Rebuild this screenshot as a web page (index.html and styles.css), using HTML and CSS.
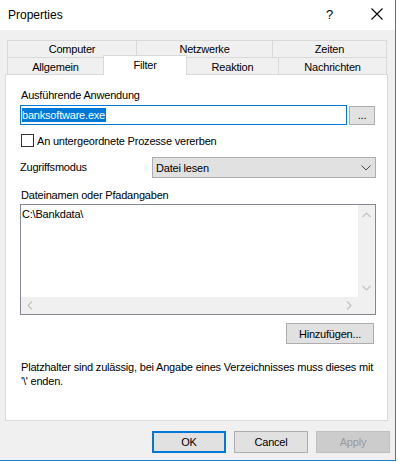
FILE: index.html
```html
<!DOCTYPE html>
<html>
<head>
<meta charset="utf-8">
<link rel="stylesheet" href="styles.css">
</head>
<body>
<div class="window">
  <div class="titlebar">
    <span class="title">Properties</span>
    <span class="help">?</span>
    <svg class="close" width="12" height="12" viewBox="0 0 12 12"><path d="M0.5 0.5 L11.5 11.5 M11.5 0.5 L0.5 11.5" stroke="#000" stroke-width="1.1" fill="none"/></svg>
  </div>
  <div class="client">
    <div class="tabs">
      <div class="tabrow back">
        <div class="tab t-computer">Computer</div>
        <div class="tab t-netz">Netzwerke</div>
        <div class="tab t-zeiten">Zeiten</div>
      </div>
      <div class="tabrow front">
        <div class="tab t-allg">Allgemein</div>
        <div class="tab t-filter active">Filter</div>
        <div class="tab t-reak">Reaktion</div>
        <div class="tab t-nach">Nachrichten</div>
      </div>
    </div>
    <div class="panel">
      <div class="label l-app">Ausführende Anwendung</div>
      <div class="row r-app">
        <div class="textbox"><span class="sel">banksoftware.exe</span></div>
        <div class="btn browse">...</div>
      </div>
      <div class="row r-check">
        <span class="checkbox"></span>
        <span class="checklabel">An untergeordnete Prozesse vererben</span>
      </div>
      <div class="row r-mode">
        <span class="modelabel">Zugriffsmodus</span>
        <div class="combo">
          <span>Datei lesen</span>
          <svg class="chev" width="10" height="6" viewBox="0 0 10 6"><path d="M0.5 0.5 L5 5 L9.5 0.5" stroke="#444" stroke-width="1" fill="none"/></svg>
        </div>
      </div>
      <div class="label l-files">Dateinamen oder Pfadangaben</div>
      <div class="listbox">
        <div class="listarea">
          <div class="items">C:\Bankdata\</div>
          <div class="vscroll">
            <svg width="9" height="6" viewBox="0 0 9 6"><path d="M0.5 5 L4.5 1 L8.5 5" stroke="#c2c2c2" stroke-width="1.2" fill="none"/></svg>
            <svg width="9" height="6" viewBox="0 0 9 6"><path d="M0.5 1 L4.5 5 L8.5 1" stroke="#c2c2c2" stroke-width="1.2" fill="none"/></svg>
          </div>
        </div>
        <div class="hscroll">
          <svg width="6" height="9" viewBox="0 0 6 9"><path d="M5 0.5 L1 4.5 L5 8.5" stroke="#c2c2c2" stroke-width="1.2" fill="none"/></svg>
          <svg width="6" height="9" viewBox="0 0 6 9"><path d="M1 0.5 L5 4.5 L1 8.5" stroke="#c2c2c2" stroke-width="1.2" fill="none"/></svg>
          <span class="corner"></span>
        </div>
      </div>
      <div class="row r-add">
        <div class="btn add">Hinzufügen...</div>
      </div>
      <p class="note">Platzhalter sind zulässig, bei Angabe eines Verzeichnisses muss dieses mit '\' enden.</p>
    </div>
    <div class="buttons">
      <div class="btn dlg ok">OK</div>
      <div class="btn dlg">Cancel</div>
      <div class="btn dlg disabled">Apply</div>
    </div>
  </div>
</div>
</body>
</html>
```

FILE: styles.css
```css
* { box-sizing: border-box; }
html, body { margin: 0; padding: 0; }
body {
  background: #ffffff;
  font-family: "Liberation Sans", Arial, sans-serif;
  font-size: 11px;
  letter-spacing: -0.2px;
  color: #000;
  width: 398px;
  height: 462px;
  overflow: hidden;
}
.window {
  width: 396px;
  height: 461px;
  border-right: 1px solid #1883d7;
  border-bottom: 1px solid #1883d7;
  display: flex;
  flex-direction: column;
  background: #f0f0f0;
}
.titlebar {
  height: 30px;
  background: #fff;
  display: flex;
  align-items: center;
  padding-left: 8px;
}
.title {
  font-size: 12px;
  letter-spacing: 0;
  flex: 1;
  padding-bottom: 1px;
}
.help {
  font-size: 13px;
  margin-right: 38px;
  padding-bottom: 2px;
}
.close {
  margin-right: 12px;
  margin-bottom: 2px;
}
.client {
  flex: 1;
  padding: 10px 5px 0 5px;
  display: flex;
  flex-direction: column;
}
.tabs {
  margin-left: 2px;
  margin-right: 3px;
}
.tabrow {
  display: flex;
  height: 17px;
}
.tab {
  border: 1px solid #d9d9d9;
  border-bottom: none;
  margin-left: -1px;
  display: flex;
  align-items: center;
  justify-content: center;
  background: #f0f0f0;
  padding-bottom: 1px;
}
.tab:first-child { margin-left: 0; }
.t-computer { width: 130px; }
.t-netz { width: 137px; }
.t-zeiten { flex: 1; }
.front .tab { padding-top: 2px; }
.t-allg { width: 97px; }
.t-filter { width: 84px; }
.t-reak { width: 93px; }
.t-nach { flex: 1; }
.tab.active {
  background: #fff;
  height: 20px;
  margin-top: -2px;
  position: relative;
  z-index: 1;
  padding-top: 0;
}
.panel {
  background: #fff;
  border: 1px solid #d9d9d9;
  height: 347px;
  margin-right: 2px;
  padding: 0 11px 0 14px;
  display: flex;
  flex-direction: column;
}
.label {
  height: 14px;
  line-height: 14px;
  padding-left: 1px;
}
.l-app { margin-top: 13px; }
.row { display: flex; align-items: center; }
.r-app { margin-top: 3px; height: 20px; }
.textbox {
  width: 327px;
  height: 20px;
  border: 1px solid #0078d7;
  padding: 2px 1px;
  display: flex;
  align-items: center;
}
.sel {
  background: #0078d7;
  color: #fff;
  height: 14px;
  line-height: 14px;
  padding-right: 1px;
}
.btn {
  background: #e1e1e1;
  border: 1px solid #adadad;
  display: flex;
  align-items: center;
  justify-content: center;
}
.browse {
  width: 26px;
  height: 19px;
  margin-left: 2px;
  margin-top: 1px;
  padding-bottom: 2px;
}
.r-check { margin-top: 9px; height: 13px; padding-left: 1px; }
.checkbox {
  width: 13px;
  height: 13px;
  border: 1px solid #333;
  background: #fff;
}
.checklabel { margin-left: 3px; }
.r-mode { margin-top: 10px; height: 21px; }
.modelabel { width: 132px; padding-bottom: 1px; }
.combo {
  width: 224px;
  height: 21px;
  background: #e1e1e1;
  border: 1px solid #adadad;
  display: flex;
  align-items: center;
  justify-content: space-between;
  padding: 0 4px 0 3px;
}
.chev { margin-right: 0; }
.l-files { margin-top: 10px; }
.listbox {
  margin-top: 2px;
  width: 356px;
  height: 111px;
  border: 1px solid #828790;
  display: flex;
  flex-direction: column;
}
.listarea { flex: 1; display: flex; }
.items {
  flex: 1;
  background: #fff;
  padding: 3px 0 0 1px;
  line-height: 13px;
}
.vscroll {
  width: 17px;
  background: #f0f0f0;
  display: flex;
  flex-direction: column;
  justify-content: space-between;
  align-items: center;
  padding: 7px 0 6px;
}
.hscroll {
  height: 17px;
  background: #f0f0f0;
  display: flex;
  align-items: center;
  padding-left: 6px;
}
.hscroll svg:nth-child(2) { margin-left: 313px; }
.corner { flex: 1; }
.r-add { justify-content: flex-end; margin-top: 8px; padding-right: 2px; }
.add {
  width: 88px;
  height: 21px;
}
.note {
  margin: 16px 0 0 1px;
  line-height: 14px;
  width: 356px;
}
.buttons {
  display: flex;
  justify-content: flex-end;
  gap: 8px;
  margin-top: 10px;
}
.dlg {
  width: 74px;
  height: 22px;
}
.ok { border: 2px solid #0078d7; }
.disabled {
  background: #cccccc;
  border-color: #bfbfbf;
  color: #9a9a9a;
}
```
